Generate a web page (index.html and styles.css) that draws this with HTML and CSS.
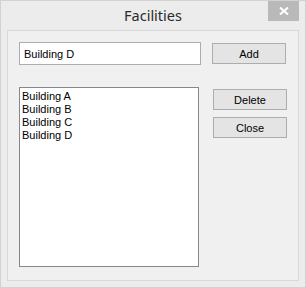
FILE: index.html
```html
<!DOCTYPE html>
<html lang="en">
<head>
    <meta charset="UTF-8">
    <meta name="viewport" content="width=device-width, initial-scale=1.0">
    <title>Facilities</title>
    <link rel="stylesheet" href="styles.css">
</head>
<body>
    <div class="facility-window">
        <div class="facility-titlebar">
            <span></span>
            <h1 class="facility-title">Facilities</h1>
            <button class="facility-close-x" type="button" aria-label="Close">
                <svg width="10" height="8" viewBox="0 0 10 8">
                    <path d="M1 0.5 L9 7.5 M9 0.5 L1 7.5" stroke="#fff" stroke-width="2" fill="none"/>
                </svg>
            </button>
        </div>
        <div class="facility-panel">
            <div class="facility-row">
                <input type="text" class="facility-input" value="Building D">
                <button type="button" class="facility-button btn-add">Add</button>
            </div>
            <div class="facility-row">
                <ul class="facility-list">
                    <li>Building A</li>
                    <li>Building B</li>
                    <li>Building C</li>
                    <li>Building D</li>
                </ul>
                <div class="facility-actions">
                    <button type="button" class="facility-button">Delete</button>
                    <button type="button" class="facility-button">Close</button>
                </div>
            </div>
        </div>
    </div>
</body>
</html>
```

FILE: styles.css
```css
* {
    padding: 0;
    margin: 0;
    box-sizing: border-box;
}
ul {
    list-style: none;
}
body {
    background: #ececec;
    font-family: "Liberation Sans", Arial, sans-serif;
}
.facility-window {
    width: 306px;
    height: 288px;
    border: 1px solid #d2d2d2;
    background: #ececec;
    padding: 0 6px 6px 6px;
}
.facility-titlebar {
    height: 29px;
    display: grid;
    grid-template-columns: 1fr auto 1fr;
    align-items: start;
}
.facility-title {
    font-family: "Noto Sans", "Open Sans", sans-serif;
    font-weight: normal;
    font-size: 14.5px;
    color: #2b2b2b;
    line-height: 18px;
    margin-top: 5px;
}
.facility-close-x {
    justify-self: end;
    width: 31px;
    height: 20px;
    border: none;
    background: #b9b9b9;
    display: flex;
    align-items: center;
    justify-content: center;
}
.facility-panel {
    height: 251px;
    border: 1px solid #d9d9d9;
    background: #f0f0f0;
    padding: 11px 0 0 11px;
}
.facility-row {
    display: flex;
    align-items: flex-start;
}
.facility-input {
    display: block;
    width: 182px;
    height: 23px;
    border: 1px solid #abadb3;
    background: #fff;
    padding: 0 4px;
    font-family: inherit;
    font-size: 11px;
    color: #000;
    outline: none;
}
.facility-button {
    display: block;
    width: 74px;
    height: 21px;
    border: 1px solid #adadad;
    background: #e4e4e4;
    font-family: inherit;
    font-size: 11px;
    color: #000;
}
.btn-add {
    margin: 1px 0 0 11px;
}
.facility-list {
    width: 180px;
    height: 180px;
    margin-top: 22px;
    border: 1px solid #828790;
    background: #fff;
    padding: 2px 0 0 2px;
    font-size: 11px;
    line-height: 13px;
    color: #000;
}
.facility-actions {
    margin: 24px 0 0 14px;
}
.facility-actions .facility-button {
    margin-bottom: 7px;
}
```
